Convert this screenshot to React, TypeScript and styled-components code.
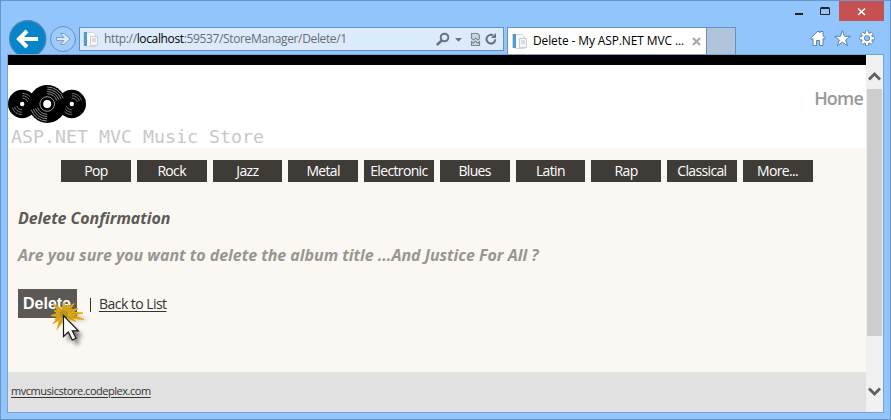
import React from "react";
import styled, { createGlobalStyle } from "styled-components";

const GlobalStyle = createGlobalStyle`
  * { box-sizing: border-box; }
  body { margin: 0; overflow: hidden; font-family: "Open Sans", "Noto Sans", sans-serif; }
  svg { display: block; flex: none; }
`;

const Window = styled.div`
  width: 891px;
  height: 420px;
  display: flex;
  flex-direction: column;
  background: #92c5fc;
  border: 1px solid #6896c6;
  padding: 0 6px 6px;
`;

const CaptionBar = styled.div`
  height: 20px;
  flex: none;
  display: flex;
  justify-content: flex-end;
`;

const CaptionButton = styled.div<{ $width: number; $danger?: boolean }>`
  width: ${(p) => p.$width}px;
  height: 20px;
  display: flex;
  align-items: center;
  justify-content: center;
  background: ${(p) => (p.$danger ? "#c75050" : "transparent")};
`;

const NavBar = styled.div`
  height: 33px;
  flex: none;
  display: flex;
  align-items: flex-end;
`;

const NavButtons = styled.div`
  width: 72px;
  height: 34px;
  margin-top: -2px;
  flex: none;
`;

const AddressBar = styled.div`
  width: 425px;
  height: 24px;
  margin: 0 3px 3px 0;
  padding-left: 3px;
  flex: none;
  display: flex;
  align-items: center;
  background: #dcebfb;
  border: 1px solid #6591c2;
`;

const Url = styled.span`
  flex: 1;
  margin-left: 5px;
  font: 12px/22px "Open Sans", sans-serif;
  letter-spacing: -0.36px;
  color: #666c74;
  white-space: nowrap;
  b { font-weight: 400; color: #000; }
`;

const Tab = styled.div`
  width: 200px;
  height: 27px;
  padding: 0 5px 0 4px;
  flex: none;
  display: flex;
  align-items: center;
  background: #fff;
  border: 1px solid #6591c2;
  border-bottom: 0;
`;

const TabTitle = styled.span`
  flex: 1;
  margin-left: 5px;
  font-size: 12px;
  line-height: 26px;
  letter-spacing: -0.12px;
  color: #000;
  white-space: nowrap;
`;

const NewTab = styled.div`
  width: 29px;
  height: 27px;
  flex: none;
  background: #b0c5db;
  border: 1px solid #6591c2;
  border-width: 1px 1px 0 0;
`;

const Tools = styled.div`
  display: flex;
  align-items: center;
  margin: 0 8px 7px auto;
`;

const Viewport = styled.div`
  height: 359px;
  width: 877px;
  flex: none;
  display: flex;
  border: 1px solid #74a5da;
  background: #fff;
`;

const Page = styled.div`
  width: 858px;
  display: flex;
  flex-direction: column;
  background: #fbf8f3;
`;

const Header = styled.header`
  height: 93px;
  flex: none;
  display: flex;
  justify-content: space-between;
  border-top: 10px solid #000;
  background: #fff;
`;

const Brand = styled.div`
  padding-top: 20px;
`;

const BrandName = styled.div`
  margin: 2px 0 0 3px;
  font: 18.27px/24px "DejaVu Sans Mono", monospace;
  color: #c8c8c8;
  white-space: nowrap;
`;

const HomeLink = styled.a`
  margin: 21px 3px 0 0;
  font-size: 18px;
  font-weight: 600;
  line-height: 24px;
  letter-spacing: -0.8px;
  color: #999;
`;

const GenreList = styled.nav`
  display: flex;
  gap: 6px;
  padding: 12px 0 0 53px;
`;

const Genre = styled.a`
  width: 69.75px;
  height: 22px;
  flex: none;
  text-align: center;
  font-size: 14px;
  line-height: 22px;
  letter-spacing: -0.66px;
  color: #fff;
  background: #3f3c37;
  white-space: nowrap;
`;

const Main = styled.main`
  flex: 1;
  padding: 24px 0 0 10px;
`;

const Title = styled.h2`
  margin: 0;
  font-size: 16px;
  line-height: 24px;
  font-weight: 700;
  font-style: italic;
  letter-spacing: -0.07px;
  color: #5c5a57;
`;

const Question = styled.h3`
  margin: 13px 0 0;
  font-size: 16px;
  line-height: 24px;
  font-weight: 700;
  font-style: italic;
  letter-spacing: -0.03px;
  color: #999690;
  white-space: nowrap;
`;

const Actions = styled.div`
  display: flex;
  align-items: center;
  margin-top: 22px;
`;

const DeleteButton = styled.button`
  position: relative;
  width: 59px;
  height: 29px;
  padding: 0 1px 0 0;
  border: 0;
  background: #5c5954;
  color: #fff;
  font: bold 16px/29px "Liberation Sans", sans-serif;
`;

const Pointer = styled.svg`
  position: absolute;
  left: 27px;
  top: 8px;
  overflow: visible;
`;

const Divider = styled.span`
  width: 1px;
  height: 14px;
  margin: 2px 8px 0 13px;
  background: #333;
`;

const BackLink = styled.a`
  font-size: 14px;
  line-height: 24px;
  letter-spacing: -0.55px;
  color: #333;
  text-decoration: underline;
  text-underline-offset: 2px;
`;

const Footer = styled.footer`
  height: 40px;
  flex: none;
  padding: 8px 0 0 3px;
  background: #e1e1e1;
  font-size: 11px;
  line-height: 22px;
  letter-spacing: -0.46px;
  color: #333;
  text-decoration: underline;
  text-underline-offset: 2px;
`;

const Scrollbar = styled.div`
  width: 17px;
  display: flex;
  flex-direction: column;
  align-items: center;
  justify-content: space-between;
  background: #f0f0f0;
`;

const ScrollThumb = styled.div`
  width: 15px;
  height: 247px;
  margin-bottom: auto;
  background: #cdcdcd;
`;

const PageIcon = () => (
  <svg width="16" height="18" viewBox="0 0 16 18">
    <path d="M3.5 2.5h7l2 2v12h-9z" fill="#f8f8f8" stroke="#d2d4d7" />
    <path d="M7.5 6.5h7v9h-7z" fill="#f7f7f7" stroke="#cbcdd0" />
    <path d="M9 9h4M9 11h4" stroke="#b8bcc1" />
    <path d="M1 2h3v14H1z" fill="#509bd2" />
    <path d="M0 2h1v14H0z" fill="#c5dced" />
  </svg>
);

const HistoryButtons = () => (
  <svg width="72" height="34" viewBox="7 20 72 34">
    <circle cx="27.7" cy="38.8" r="18.2" fill="#0785ca" stroke="#5482ad" strokeWidth="1.2" />
    <path d="M38 39H20M27 31l-8 8 8 8" fill="none" stroke="#fff" strokeWidth="4" />
    <circle cx="63" cy="39" r="12.5" fill="#9ecbfb" stroke="#6591c2" />
    <path d="M56.5 37.5h7.5l-3.5-4h3.5l6 5.5-6 5.5h-3.5l3.5-4h-7.5z" fill="#dcecfb" stroke="#7099c4" strokeWidth=".9" />
  </svg>
);

const AddressIcons = () => (
  <svg width="68" height="22" viewBox="436 28 68 22">
    <circle cx="445.5" cy="37.5" r="3.8" fill="none" stroke="#67737f" strokeWidth="2" />
    <path d="M442.8 40.5l-5 4.5" stroke="#67737f" strokeWidth="2.4" />
    <path d="M456 38h7l-3.5 3.7z" fill="#67737f" />
    <path d="M472.5 38v-4.5h6l2 2V38M472.5 42v3.5h8V42" fill="#c9d5e0" stroke="#7d8995" strokeWidth="1.2" />
    <path d="M472 38l2.500 2 2-2 2.500 2 2-2M472 41l2.500 2 2-2 2.500 2 2-2" fill="none" stroke="#7d8995" strokeWidth="1.1" />
    <path d="M494 35.300a4.400 4.400 0 1 0 2.300 4" fill="none" stroke="#67737f" strokeWidth="2" />
    <path d="M492 38h5V33z" fill="#67737f" />
  </svg>
);

const ToolIcons = () => (
  <svg width="66" height="18" viewBox="810 29 66 18">
    <g fill="#fff" stroke="#5d82ab" strokeWidth="1">
      <path d="M810.7 38l7.3-7 2 1.900v-1.400h3v4.300l2.300 2.200-1 1.500-1.300-1v7h-3.500v-5h-3v5H813v-7l-1.300 1z" />
      <path d="M842.500 30.500l2 5.800h6l-4.800 3.600 1.900 5.900-5.100-3.600-5.100 3.600 1.900-5.900-4.800-3.600h6z" />
    </g>
    <g transform="translate(867 38.2)">
      {[0, 45, 90, 135].map((a) => (
        <path key={a} transform={`rotate(${a})`} d="M0-7.500v15" stroke="#5d82ab" strokeWidth="4" />
      ))}
      <circle r="5.5" fill="#fff" stroke="#5d82ab" />
      {[0, 45, 90, 135].map((a) => (
        <path key={a} transform={`rotate(${a})`} d="M0-7v14" stroke="#fff" strokeWidth="2.3" />
      ))}
      <circle r="2.6" fill="#92c5fc" stroke="#5d82ab" />
    </g>
  </svg>
);

const Disc = ({ x, r }: { x: number; r: number }) => {
  const large = r > 15;
  const rings = large ? [0.54, 0.66, 0.78, 0.9] : [0.42, 0.58, 0.74];
  return (
    <g transform={`translate(${x} 19)`}>
      <circle r={r} fill="#000" />
      {rings.map((k) => {
        const a = r * k;
        const s = a * 0.94;
        const c = a * 0.34;
        return (
          <path
            key={k}
            d={`M0 ${-a}A${a} ${a} 0 0 1 ${s} ${-c}M0 ${a}A${a} ${a} 0 0 1 ${-s} ${c}`}
            fill="none"
            stroke="#b0b0b0"
            strokeWidth={large ? 0.8 : 0.65}
          />
        );
      })}
      {large && <circle r="7.3" fill="none" stroke="#aaa" strokeWidth=".9" />}
      <circle r={large ? 4 : 2.2} fill="#fff" />
    </g>
  );
};

const Records = () => (
  <svg width="78" height="38" viewBox="0 0 78 38">
    <Disc x={14.2} r={14.2} />
    <Disc x={63.8} r={14.2} />
    <Disc x={39.2} r={18.9} />
  </svg>
);

const burstTips = [
  [-11, -11], [-6, -8], [0, -12], [4.5, -10], [10, -11], [14, -6], [19, -1.5],
  [20, 5], [12, 7], [-1, 8], [-7, 15], [-11, 9], [-9, 5], [-13, 1], [-10, -4],
];

const ClickPointer = () => (
  <Pointer width="42" height="48" viewBox="45 297 42 48">
    <defs>
      <filter id="soft" x="-50%" y="-50%" width="200%" height="200%">
        <feGaussianBlur stdDeviation="2" />
      </filter>
    </defs>
    <path d="M68 321l15 16-6 0 3 6-4 2-4-7-4 4zM68 318l21 2-17-5z" fill="#000" opacity=".5" filter="url(#soft)" />
    <g transform="translate(64 314.5)">
      {burstTips.map(([x, y]) => {
        const n = Math.hypot(x, y);
        const px = (-y / n) * 1.5;
        const py = (x / n) * 1.5;
        return (
          <path
            key={`${x},${y}`}
            d={`M0 0L${x * 0.5 + px} ${y * 0.5 + py}L${x} ${y}L${x * 0.5 - px} ${y * 0.5 - py}Z`}
            fill="#c3981f"
            stroke="#ebb010"
            strokeWidth="1"
            strokeLinejoin="round"
          />
        );
      })}
      <circle r="4" fill="#a28b2c" opacity=".75" />
    </g>
    <path d="M63.5 315.500v21l4.800-4.500 4 8 3.800-1.800-3.800-7.400h6z" fill="#fff" stroke="#151515" strokeWidth="1.2" />
  </Pointer>
);

const ScrollArrow = ({ down }: { down?: boolean }) => (
  <svg width="17" height="34" viewBox="0 0 17 34">
    <path d={down ? "M3 10.500l5.500 5.500 5.500-5.500" : "M3 24.500l5.500-5.500 5.500 5.500"} fill="none" stroke="#606060" strokeWidth="2.800" />
  </svg>
);

const genres = ["Pop", "Rock", "Jazz", "Metal", "Electronic", "Blues", "Latin", "Rap", "Classical", "More..."];

export default function App() {
  return (
    <>
      <GlobalStyle />
      <Window>
        <CaptionBar>
          <CaptionButton $width={26}>
            <svg width="9" height="20"><path d="M0 13h8" stroke="#222" strokeWidth="2" /></svg>
          </CaptionButton>
          <CaptionButton $width={27}>
            <svg width="11" height="20"><path d="M.5 7.500h9v6h-9zM.5 6.500h9" fill="none" stroke="#222" /></svg>
          </CaptionButton>
          <CaptionButton $width={45} $danger>
            <svg width="9" height="20"><path d="M1 7.500l7 6.500M8 7.500L1 14" stroke="#fff" strokeWidth="1.700" /></svg>
          </CaptionButton>
        </CaptionBar>
        <NavBar>
          <NavButtons><HistoryButtons /></NavButtons>
          <AddressBar>
            <PageIcon />
            <Url>http://<b>localhost</b>:59537/StoreManager/Delete/1</Url>
            <AddressIcons />
          </AddressBar>
          <Tab>
            <PageIcon />
            <TabTitle>Delete - My ASP.NET MVC ...</TabTitle>
            <svg width="9" height="9"><path d="M1 1l7 7M8 1L1 8" stroke="#aaa" strokeWidth="2.300" /></svg>
          </Tab>
          <NewTab />
          <Tools><ToolIcons /></Tools>
        </NavBar>
        <Viewport>
          <Page>
            <Header>
              <Brand>
                <Records />
                <BrandName>ASP.NET MVC Music Store</BrandName>
              </Brand>
              <HomeLink>Home</HomeLink>
            </Header>
            <GenreList>
              {genres.map((g) => <Genre key={g}>{g}</Genre>)}
            </GenreList>
            <Main>
              <Title>Delete Confirmation</Title>
              <Question>Are you sure you want to delete the album title ...And Justice For All ?</Question>
              <Actions>
                <DeleteButton>Delete<ClickPointer /></DeleteButton>
                <Divider />
                <BackLink>Back to List</BackLink>
              </Actions>
            </Main>
            <Footer>mvcmusicstore.codeplex.com</Footer>
          </Page>
          <Scrollbar>
            <ScrollArrow />
            <ScrollThumb />
            <ScrollArrow down />
          </Scrollbar>
        </Viewport>
      </Window>
    </>
  );
}
